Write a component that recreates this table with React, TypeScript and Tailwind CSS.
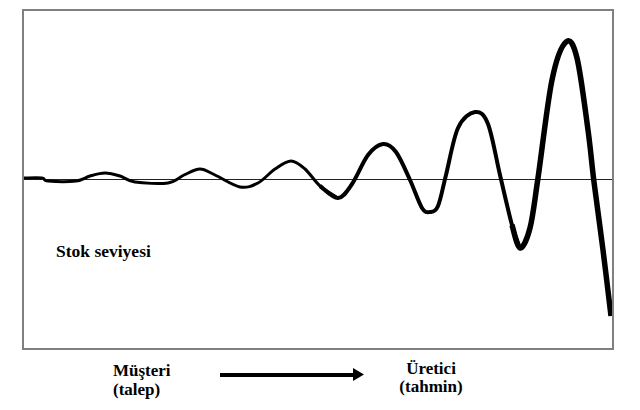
import React from "react";

type Pt = [number, number];

// catmull-rom -> cubic bezier so the wave stays smooth
const smooth = (pts: Pt[]) => {
  let d = `M${pts[0][0]},${pts[0][1]}`;
  for (let i = 0; i < pts.length - 1; i++) {
    const p0 = pts[i - 1] || pts[i];
    const p1 = pts[i];
    const p2 = pts[i + 1];
    const p3 = pts[i + 2] || p2;
    const c1x = p1[0] + (p2[0] - p0[0]) / 6;
    const c1y = p1[1] + (p2[1] - p0[1]) / 6;
    const c2x = p2[0] - (p3[0] - p1[0]) / 6;
    const c2y = p2[1] - (p3[1] - p1[1]) / 6;
    d += ` C${c1x},${c1y} ${c2x},${c2y} ${p2[0]},${p2[1]}`;
  }
  return d;
};

const small: Pt[] = [
  [24, 178], [42, 178], [48, 181], [76, 181], [90, 176], [105, 173],
  [120, 176], [135, 182], [168, 183], [184, 175], [200, 169], [215, 175],
  [240, 187], [258, 183], [275, 169], [291, 161], [305, 169], [320, 186],
  [338, 198],
];

const mid: Pt[] = [
  [320, 186], [338, 198], [352, 184], [368, 155], [383, 144], [396, 152],
  [410, 180], [422, 208], [430, 212], [438, 206], [446, 175], [458, 128],
  [475, 112], [488, 124], [500, 175], [512, 225], [520, 248],
];

const big: Pt[] = [
  [512, 225], [520, 248], [530, 228], [538, 178], [552, 80], [566, 42],
  [577, 58], [588, 130], [594, 182], [603, 250], [611, 316],
];

const StockChart = () => {
  return (
    <div className="relative w-[592px] h-[341px] border-2 border-[#808080] bg-white">
      <svg
        className="absolute inset-0 w-full h-full"
        viewBox="24 11 588 337"
        preserveAspectRatio="none"
      >
        <line x1="24" y1="179.5" x2="612" y2="179.5" stroke="#222" strokeWidth="1.2" />
        <path d={smooth(small)} fill="none" stroke="#000" strokeWidth="3" strokeLinejoin="round" />
        <path d={smooth(mid)} fill="none" stroke="#000" strokeWidth="4" strokeLinejoin="round" />
        <path d={smooth(big)} fill="none" stroke="#000" strokeWidth="5.5" strokeLinejoin="round" />
      </svg>
      <p className="absolute left-[32px] top-[227px] text-[17.5px] font-bold text-black">
        Stok seviyesi
      </p>
    </div>
  );
};

export default function App() {
  return (
    <div className="w-[640px] h-[410px] bg-white pt-[9px] pl-[22px] [font-family:'Liberation_Serif',serif] text-black overflow-hidden">
      <StockChart />
      <div className="flex items-start mt-[11px] text-[17px] font-bold leading-[19px]">
        <div className="ml-[91px] w-[60px]">
          <p>Müşteri</p>
          <p>(talep)</p>
        </div>
        <div className="ml-[47px] mt-[7px] flex items-center">
          <div className="w-[133px] h-[4px] bg-black" />
          <svg width="11" height="13" viewBox="0 0 11 13">
            <polygon points="0,0 11,6.5 0,13" fill="#000" />
          </svg>
        </div>
        <div className="ml-[34px] -mt-[1px] flex flex-col items-center w-[66px] leading-[18px]">
          <p>Üretici</p>
          <p>(tahmin)</p>
        </div>
      </div>
    </div>
  );
}
